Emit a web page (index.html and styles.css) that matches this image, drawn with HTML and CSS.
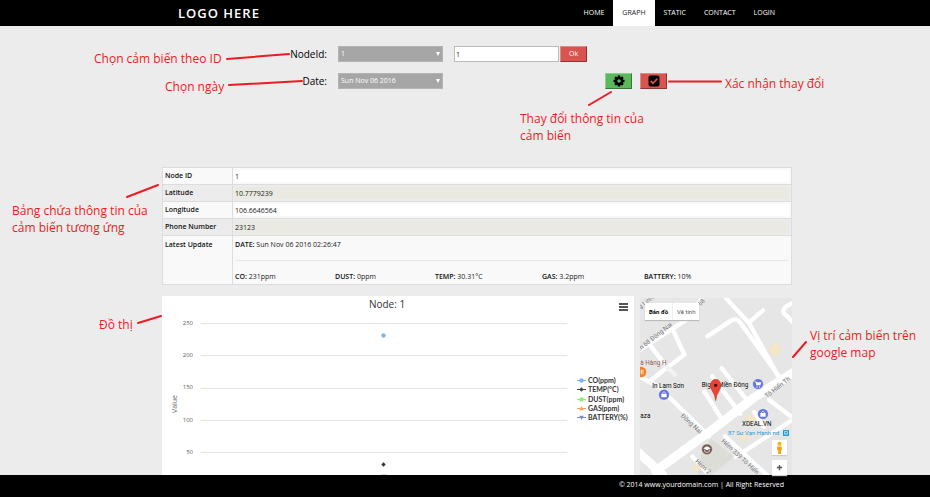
FILE: index.html
```html
<!DOCTYPE html>
<html lang="vi">
<head>
<meta charset="utf-8">
<title>Graph</title>
<link rel="stylesheet" href="styles.css">
</head>
<body>
<header class="topbar wrap">
  <a class="logo" href="#">LOGO HERE</a>
  <nav class="nav">
    <a href="#">HOME</a>
    <a href="#" class="active">GRAPH</a>
    <a href="#">STATIC</a>
    <a href="#">CONTACT</a>
    <a href="#">LOGIN</a>
  </nav>
</header>

<main class="content wrap">
  <form class="filters">
    <label for="node">NodeId:</label>
    <div class="picker"><select id="node"><option>1</option></select></div>
    <input id="node-value" class="node-input" type="text" value="1" aria-label="Node">
    <div class="actions"><button type="button" class="btn red">Ok</button></div>

    <label for="date">Date:</label>
    <div class="picker"><select id="date"><option>Sun Nov 06 2016</option></select></div>
    <div class="actions last">
      <button type="button" class="btn green" aria-label="Settings">
        <svg viewBox="0 0 24 24" width="12" height="12"><g stroke="#000" stroke-width="5"><path d="M12 1v22M1 12h22M4.200 4.200l15.600 15.600M19.800 4.200L4.200 19.800"/></g><circle cx="12" cy="12" r="8.500"/><circle cx="12" cy="12" r="3.600" fill="#5cb85c"/></svg>
      </button>
      <button type="button" class="btn red" aria-label="Confirm">
        <svg viewBox="0 0 24 24" width="12" height="12"><rect x="1" y="1" width="22" height="22" rx="4"/><path d="M5.500 12l4.500 4.500 8.500-9" fill="none" stroke="#d9534f" stroke-width="3.600"/></svg>
      </button>
    </div>
  </form>

  <table class="info">
    <tr><th><label for="f1">Node ID</label></th><td><input id="f1" value="1"></td></tr>
    <tr class="alt"><th><label for="f2">Latitude</label></th><td><input id="f2" value="10.7779239"></td></tr>
    <tr><th><label for="f3">Longitude</label></th><td><input id="f3" value="106.6646564"></td></tr>
    <tr class="alt"><th><label for="f4">Phone Number</label></th><td><input id="f4" value="23123"></td></tr>
    <tr class="latest"><th>Latest Update</th><td>
      <p class="date"><b>DATE:</b> Sun Nov 06 2016 02:26:47</p>
      <div class="metrics">
        <span><b>CO:</b> 231ppm</span>
        <span><b>DUST:</b> 0ppm</span>
        <span><b>TEMP:</b> 30.31°C</span>
        <span><b>GAS:</b> 3.2ppm</span>
        <span><b>BATTERY:</b> 10%</span>
      </div>
    </td></tr>
  </table>

  <div class="panels">
    <section class="chart">
      <svg viewBox="0 0 472 179">
        <text class="title" x="225" y="12" text-anchor="middle">Node: 1</text>
        <g stroke="#e2e2e2"><path d="M39 27.500H405M39 59.500H405M39 92.500H405M39 124.500H405M39 156.500H405"/></g>
        <g class="ticks" text-anchor="end">
          <text x="31" y="29">250</text><text x="31" y="61">200</text><text x="31" y="93">150</text><text x="31" y="126">100</text><text x="31" y="158">50</text>
        </g>
        <text class="axis" transform="translate(15 108) rotate(-90)" text-anchor="middle">Value</text>
        <circle cx="221.500" cy="39.500" r="2.200" fill="#7cb5ec"/>
        <path d="M221.500 166.300l2.200 2.200-2.200 2.200-2.200-2.200z" fill="#333"/>
        <path d="M219.500 178.800h5" stroke="#8085e9" stroke-width=".5"/>
        <g class="legend">
          <path d="M415 84.500h9" stroke="#7cb5ec"/><circle cx="419.500" cy="84.500" r="2.200" fill="#7cb5ec"/>
          <path d="M415 93.500h9" stroke="#434348"/><path d="M419.500 91.300l2.200 2.200-2.200 2.200-2.200-2.200z" fill="#434348"/>
          <path d="M415 103.500h9" stroke="#90ed7d"/><path d="M417.500 101.500h4v4h-4z" fill="#90ed7d"/>
          <path d="M415 112.500h9" stroke="#f7a35c"/><path d="M419.500 110l2.300 4.300h-4.600z" fill="#f7a35c"/>
          <path d="M415 121.500h9" stroke="#8085e9"/><path d="M419.500 124l2.300-4.300h-4.600z" fill="#8085e9"/>
          <text x="426" y="87">CO(ppm)</text><text x="426" y="96">TEMP(°C)</text><text x="426" y="106">DUST(ppm)</text><text x="426" y="115">GAS(ppm)</text><text x="426" y="124">BATTERY(%)</text>
        </g>
      </svg>
      <button type="button" class="menu" aria-label="Chart menu"><svg viewBox="0 0 9 8" width="9" height="8"><path d="M0 1h9M0 4h9M0 7h9" stroke="#555" stroke-width="2"/></svg></button>
    </section>

    <section class="map">
      <svg viewBox="3 3 456 531">
        <path fill="#e6e6e6" d="M0 0h462v540H0z"/>
        <path fill="#dcddd7" d="M216 425l70 55-70 54h-40l10-60z"/>
        <g fill="none" stroke="#fff" stroke-linecap="round" stroke-linejoin="round">
          <path stroke-width="27" d="M0 468L72 534M50 522L220 398 345 302 470 222"/>
          <path stroke-width="13" d="M0 238l60 32 150 148M0 160L152 62 190 0M100 95l36 78-66 50-40 32M30 140l44 58M205 118l72-48q14-8 26 6l130 180M258 0l72 78 88 160M330 76l42-36M196 284l56 88M220 238l84 112M248 214l80 100M160 478l40 45M258 418l130 120M290 480L455 372M390 308l65 50M462 18q-42 18-24 34l30 30M345 345l30 44"/>
          <path stroke-width="13" stroke="#f3f3f3" d="M86 212l22 22"/>
        </g>
        <g fill="#f4e6c6" stroke="#eddcb5"><path d="M406 136l23 18-20 26-23-17zM330 352l20 14-10 16-24-14zM312 408l17 10-12 16-17-9zM170 502l15 10-10 13-15-8z"/></g>
        <g class="streets">
          <text transform="translate(4 36) rotate(-38)">g Linh</text>
          <text transform="translate(2 162) rotate(-38)">m 68 Đồng Nai</text>
          <text transform="translate(184 28) rotate(-45)">68</text>
          <text transform="translate(124 358) rotate(43)">Đồng Nai</text>
          <text transform="translate(384 304) rotate(-38)">Tô Hiến Th</text>
          <text transform="translate(246 434) rotate(43)">Hẻm 339 Tô Hiến</text>
          <text transform="translate(168 494) rotate(43)">Hẻm 2</text>
        </g>
        <g class="places">
          <text x="4" y="204" fill="#8d5a52">à Hàng H</text><text x="40" y="272">In Lam Sơn</text><text x="188" y="270">Big C Miền Đông</text><text x="4" y="362">aza</text><text x="309" y="387">XDEAL.VN</text>
          <text class="stop" x="267" y="413">87 Sư Vạn Hạnh nd</text>
        </g>
        <rect x="432" y="399" width="18" height="18" rx="2" fill="#199bd7"/><path d="M437 403h8v8h-8zM437 413h2M443 413h2" fill="none" stroke="#fff" stroke-width="2"/>
        <circle cx="6" cy="225" r="16" fill="#f58220"/><path d="M2 218v14M7 218v14M12 232v-13q-5 2-5 8" fill="none" stroke="#fff" stroke-width="2"/>
        <g fill="#6474d8" stroke="#fff" stroke-width="1"><circle cx="75" cy="293" r="16"/><circle cx="357" cy="261" r="16"/><circle cx="372" cy="351" r="16"/></g>
        <g fill="#fff"><path d="M67 290h16v11H67zM364 348h16v11h-16zM350 256h17l-3 9h-12z"/><circle cx="354" cy="270" r="2"/><circle cx="362" cy="270" r="2"/></g>
        <g fill="none" stroke="#fff" stroke-width="2"><path d="M71 290v-3q4-6 8 0v3M368 348v-3q4-6 8 0v3M346 253h4l2 6"/></g>
        <circle cx="204" cy="457" r="16" fill="#795b53" stroke="#fff"/><path d="M193 454l11-6 11 6-11 6z" fill="#fff"/><path d="M197 458v6q7 5 14 0v-6" fill="none" stroke="#fff" stroke-width="2"/>
        <path d="M230 311q-2-18-10-29c-12-17-3-35 10-35s22 18 10 35q-8 11-10 29z" fill="#ea4335" stroke="#b6271f" stroke-width="1.500"/><circle cx="230" cy="265" r="5" fill="#4b0b08"/>
      </svg>
      <div class="map-type"><button type="button" class="on">Bản đồ</button><button type="button">Vệ tinh</button></div>
      <div class="map-tools">
        <button type="button" aria-label="Street View"><svg viewBox="0 0 12 14" width="11" height="13"><circle cx="6" cy="3" r="2.300" fill="#fbb415"/><path d="M3.500 6h5v4H7.500v4h-3v-4h-1z" fill="#f0a30a"/></svg></button>
        <button type="button" aria-label="Zoom in"><svg viewBox="0 0 8 8" width="7" height="7"><path d="M4 1v6M1 4h6" stroke="#555" stroke-width="1.600"/></svg></button>
      </div>
    </section>
  </div>
</main>

<footer class="footer wrap">© 2014 www.yourdomain.com | All Right Reserved</footer>

<div class="notes">
  <svg width="930" height="497" viewBox="0 0 930 497"><path d="M227 59L289 54M229 85L302 81M669 81.500H721M589 105L611 92M127 197L158 185M138 323L161 316M793 357L806 342"/></svg>
  <p class="note n-id">Chọn cảm biến theo ID</p>
  <p class="note n-date">Chọn ngày</p>
  <p class="note n-ok">Xác nhận thay đổi</p>
  <p class="note n-edit">Thay đổi thông tin của<br>cảm biến</p>
  <p class="note n-table">Bảng chứa thông tin của<br>cảm biến tương ứng</p>
  <p class="note n-chart">Đồ thị</p>
  <p class="note n-map">Vị trí cảm biến trên<br>google map</p>
</div>
</body>
</html>
```
FILE: styles.css
```css
* { box-sizing: border-box; }
body {
  margin: 0;
  min-height: 100vh;
  display: flex;
  flex-direction: column;
  position: relative;
  background: #ececec;
  color: #222;
  font: 7px/10px "Open Sans", sans-serif;
}
button, input, select { font: inherit; color: inherit; margin: 0; }
p { margin: 0; }
.wrap { padding-left: 162px; padding-right: 138px; }

.topbar {
  display: flex;
  justify-content: space-between;
  height: 26px;
  background: #000;
}
.logo {
  padding-left: 16px;
  color: #fff;
  font-size: 13px;
  font-weight: 600;
  line-height: 26px;
  letter-spacing: 1px;
  text-decoration: none;
}
.nav { display: flex; padding-right: 8px; }
.nav a {
  padding: 0 9px;
  color: #fff;
  line-height: 26px;
  text-decoration: none;
}
.nav .active { background: #fff; color: #222; }

.content { flex: 1; }
.filters {
  display: grid;
  grid-template-columns: 165fr 105fr 140fr 187fr;
  gap: 11px;
  padding-top: 20px;
  align-items: center;
}
.filters label {
  color: #000;
  font-size: 10px;
  font-weight: 500;
  line-height: 16px;
  text-align: right;
}
.picker { position: relative; display: flex; }
.picker::after {
  content: "";
  position: absolute;
  right: 3px;
  top: 6px;
  border: 2px solid transparent;
  border-top: 4px solid #fff;
  border-bottom: 0;
}
.picker select {
  appearance: none;
  width: 100%;
  height: 16px;
  padding: 0 2px;
  border: 1px solid #b4b4b4;
  border-radius: 0;
  background: #a6a6a6;
  color: #fff;
}
.node-input {
  width: 105px;
  height: 16px;
  padding: 0 1px;
  border: 1px solid #bbb;
  background: #fff;
}
.actions { display: flex; gap: 8px; margin-left: -45px; }
.actions.last { grid-column: 4; margin-left: 0; }
.btn {
  display: flex;
  align-items: center;
  justify-content: center;
  width: 27px;
  height: 16px;
  padding: 0;
  border: 1px solid;
  color: #fff;
}
.red { background: #d9534f; border-color: #e08a87 #8c3532 #8c3532 #e08a87; }
.green { background: #5cb85c; border-color: #8fd08f #3b773b #3b773b #8fd08f; }

.info {
  width: 100%;
  margin-top: 78px;
  border-collapse: collapse;
  background: #f9f9f9;
  table-layout: fixed;
}
.info th, .info td {
  height: 17px;
  padding: 0 2px;
  border: 1px solid #ddd;
  text-align: left;
  vertical-align: middle;
}
.info th { width: 70px; font-weight: 600; color: #111; }
.info b { font-weight: 600; color: #111; }
.info input {
  display: block;
  width: 100%;
  height: 12px;
  padding: 0;
  border: 0;
  background: #fff;
}
.alt { background: #ececec; }
.info .alt input { background: #eaeae2; }
.info .latest th, .info .latest td { padding-top: 4px; vertical-align: top; }
.date { padding-bottom: 10px; border-bottom: 1px solid #e8e8e8; }
.metrics {
  display: grid;
  grid-template-columns: 100fr 100fr 107fr 102fr 145fr;
  padding: 11px 0 2px;
}

.panels {
  display: grid;
  grid-template-columns: 472fr 152fr;
  gap: 6px;
  margin-top: 11px;
}
.panels section { position: relative; }
.panels section > svg { display: block; width: 100%; }
.chart { background: #fff; }
.title { font-size: 10px; fill: #333; }
.ticks { font-size: 6px; fill: #606060; }
.axis { font-size: 7px; fill: #606060; }
.legend text { font: 700 7px Lato, sans-serif; fill: #333; }
.menu {
  position: absolute;
  right: 5px;
  top: 6px;
  display: flex;
  padding: 1px;
  border: 0;
  background: none;
}
.map { margin-top: 2px; }
.streets text { font: 19px Roboto, sans-serif; fill: #777; stroke: #eee; stroke-width: 3px; paint-order: stroke; }
.places text { font: 19px Roboto, sans-serif; stroke: #eee; stroke-width: 2px; paint-order: stroke; }
.places .stop { font-size: 18px; fill: #1f97cf; }
.map-type {
  position: absolute;
  left: 5px;
  top: 5px;
  display: flex;
  background: #fff;
  box-shadow: 0 1px 1px #bbb;
}
.map-type button {
  height: 17px;
  padding: 0 4px;
  border: 0;
  background: none;
  color: #555;
  font: 6px Roboto, sans-serif;
}
.map-type .on { font-weight: 700; color: #000; border-right: 1px solid #eee; }
.map-tools {
  position: absolute;
  right: 5px;
  bottom: 0;
  display: grid;
  gap: 5px;
}
.map-tools button {
  display: flex;
  align-items: center;
  justify-content: center;
  width: 15px;
  height: 15px;
  padding: 0;
  border: 0;
  background: #fff;
  box-shadow: 0 1px 1px #ccc;
}

.footer {
  height: 22px;
  background: #000;
  color: #fff;
  line-height: 20px;
  text-align: right;
}
.footer.wrap { padding-right: 146px; }

.notes { position: absolute; inset: 0; overflow: hidden; pointer-events: none; }
.notes svg { display: block; fill: none; stroke: #ed1c24; stroke-width: 2; stroke-linecap: round; }
.note {
  position: absolute;
  color: #ed1c24;
  font: 12px/17px "Open Sans", sans-serif;
  white-space: nowrap;
}
.n-id { left: 94px; top: 50px; }
.n-date { left: 165px; top: 78px; }
.n-ok { left: 725px; top: 75px; }
.n-edit { left: 520px; top: 110px; }
.n-table { left: 12px; top: 202px; }
.n-chart { left: 99px; top: 316px; }
.n-map { left: 810px; top: 327px; }
```
